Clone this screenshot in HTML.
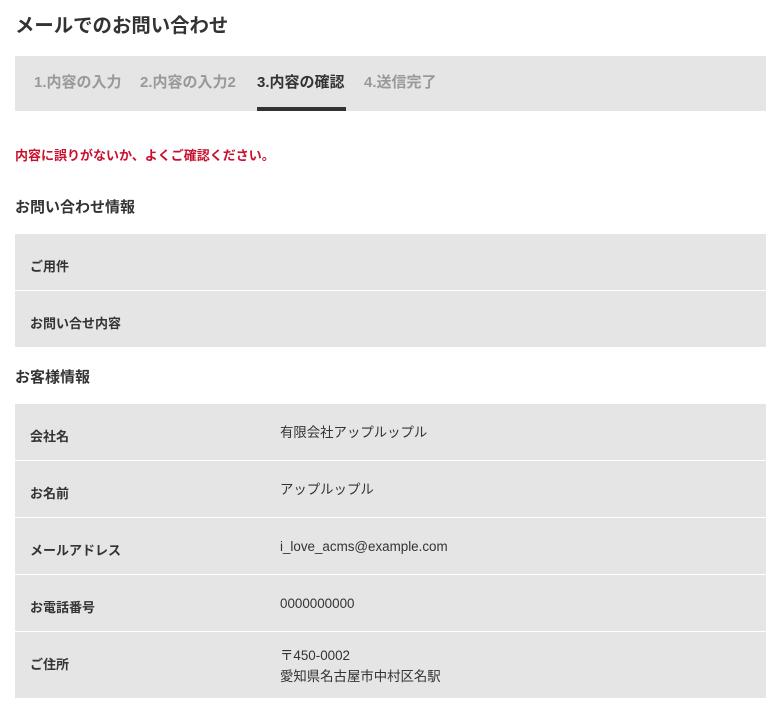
<!DOCTYPE html>
<html><head><meta charset="utf-8"><style>
*{margin:0;padding:0;box-sizing:border-box}
body{width:780px;height:715px;background:#fff;position:relative;font-family:"Liberation Sans","Noto Sans CJK JP",sans-serif;color:#333;overflow:hidden}
.a{position:absolute;white-space:nowrap}
.bg{position:absolute;left:15px;width:751px;background:#e5e5e5}
.tab{font-size:15px;font-weight:bold;color:#999;top:73px;line-height:20px}
.lb{font-size:13px;font-weight:bold;color:#333;left:30px;line-height:18px}
.v{font-size:13.4px;color:#333;left:280px;line-height:21px}
.h{font-size:15px;font-weight:bold;color:#333;left:15px;line-height:20px}
</style></head><body>
<div class="a" style="left:15px;top:12px;font-size:19.4px;font-weight:bold;color:#333;line-height:28px">メールでのお問い合わせ</div>
<div class="bg" style="top:56px;height:55px"></div>
<div class="a tab" style="left:34px">1.内容の入力</div>
<div class="a tab" style="left:140px">2.内容の入力2</div>
<div class="a tab" style="left:257px;color:#333">3.内容の確認</div>
<div class="a" style="left:257px;top:107px;width:89px;height:4px;background:#333"></div>
<div class="a tab" style="left:364px">4.送信完了</div>
<div class="a" style="left:15px;top:147px;font-size:13px;font-weight:bold;color:#c8102e;line-height:18px">内容に誤りがないか、よくご確認ください。</div>
<div class="a h" style="top:198px">お問い合わせ情報</div>
<div class="bg" style="top:234px;height:56px"></div>
<div class="bg" style="top:291px;height:56px"></div>
<div class="a lb" style="top:258px">ご用件</div>
<div class="a lb" style="top:315px">お問い合せ内容</div>
<div class="a h" style="top:368px">お客様情報</div>
<div class="bg" style="top:404px;height:56px"></div>
<div class="bg" style="top:461px;height:56px"></div>
<div class="bg" style="top:518px;height:56px"></div>
<div class="bg" style="top:575px;height:56px"></div>
<div class="bg" style="top:632px;height:66px"></div>
<div class="a lb" style="top:428px">会社名</div>
<div class="a v" style="top:422px">有限会社アップルップル</div>
<div class="a lb" style="top:485px">お名前</div>
<div class="a v" style="top:479px">アップルップル</div>
<div class="a lb" style="top:542px">メールアドレス</div>
<div class="a v" style="top:536px">i_love_acms@example.com</div>
<div class="a lb" style="top:599px">お電話番号</div>
<div class="a v" style="top:593px">0000000000</div>
<div class="a lb" style="top:656px">ご住所</div>
<div class="a v" style="top:645px">〒450-0002<br>愛知県名古屋市中村区名駅</div>
</body></html>
